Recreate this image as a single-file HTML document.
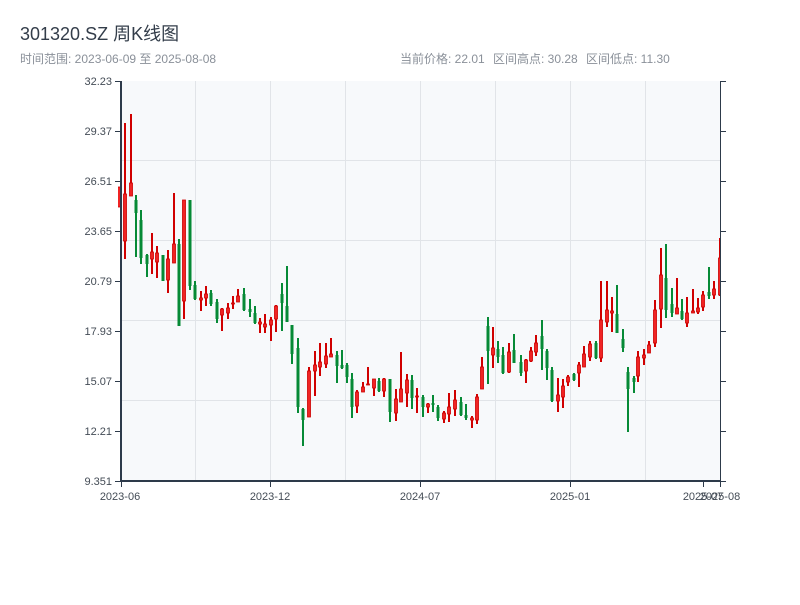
<!DOCTYPE html>
<html><head><meta charset="utf-8"><style>
body{margin:0;background:#fff;width:800px;height:600px;overflow:hidden;font-family:"Liberation Sans","Noto Sans CJK SC",sans-serif}
</style></head><body>
<svg width="800" height="600" xmlns="http://www.w3.org/2000/svg" font-family="Liberation Sans, Noto Sans CJK SC, sans-serif">
<text x="20" y="40" font-size="18" fill="#333d4a">301320.SZ 周K线图</text>
<text x="20" y="63" font-size="12" fill="#8a9099">时间范围: 2023-06-09 至 2025-08-08</text>
<text x="400" y="63" font-size="12" fill="#8a9099">当前价格: 22.01</text>
<text x="493" y="63" font-size="12" fill="#8a9099">区间高点: 30.28</text>
<text x="586" y="63" font-size="12" fill="#8a9099">区间低点: 11.30</text>
<rect x="121" y="81" width="599" height="400" fill="#f7f9fb"/>
<g stroke="#e1e4e8" stroke-width="1">
<line x1="195.5" y1="81" x2="195.5" y2="481"/><line x1="270.5" y1="81" x2="270.5" y2="481"/><line x1="345.5" y1="81" x2="345.5" y2="481"/><line x1="420.5" y1="81" x2="420.5" y2="481"/><line x1="495.5" y1="81" x2="495.5" y2="481"/><line x1="570.5" y1="81" x2="570.5" y2="481"/><line x1="645.5" y1="81" x2="645.5" y2="481"/>
<line x1="121" y1="160.5" x2="720" y2="160.5"/><line x1="121" y1="240.5" x2="720" y2="240.5"/><line x1="121" y1="320.5" x2="720" y2="320.5"/><line x1="121" y1="400.5" x2="720" y2="400.5"/>
</g>
<defs><clipPath id="c"><rect x="118" y="81" width="602" height="400"/></clipPath></defs>
<g clip-path="url(#c)" id="cs"></g>
<g stroke="#2d3a4a">
<line x1="121" y1="81" x2="121" y2="482" stroke-width="2"/>
<line x1="120" y1="481" x2="721" y2="481" stroke-width="2"/>
<line x1="720.5" y1="81" x2="720.5" y2="481" stroke-width="1"/>
<g stroke-width="1">
<line x1="115" y1="81.5" x2="121" y2="81.5"/><line x1="115" y1="131.5" x2="121" y2="131.5"/><line x1="115" y1="181.5" x2="121" y2="181.5"/><line x1="115" y1="231.5" x2="121" y2="231.5"/><line x1="115" y1="281.5" x2="121" y2="281.5"/><line x1="115" y1="331.5" x2="121" y2="331.5"/><line x1="115" y1="381.5" x2="121" y2="381.5"/><line x1="115" y1="431.5" x2="121" y2="431.5"/><line x1="115" y1="481.5" x2="121" y2="481.5"/>
<line x1="720" y1="81.5" x2="726" y2="81.5"/><line x1="720" y1="131.5" x2="726" y2="131.5"/><line x1="720" y1="181.5" x2="726" y2="181.5"/><line x1="720" y1="231.5" x2="726" y2="231.5"/><line x1="720" y1="281.5" x2="726" y2="281.5"/><line x1="720" y1="331.5" x2="726" y2="331.5"/><line x1="720" y1="381.5" x2="726" y2="381.5"/><line x1="720" y1="431.5" x2="726" y2="431.5"/><line x1="720" y1="481.5" x2="726" y2="481.5"/>
<line x1="121.5" y1="481" x2="121.5" y2="487"/><line x1="270.5" y1="481" x2="270.5" y2="487"/><line x1="420.5" y1="481" x2="420.5" y2="487"/><line x1="570.5" y1="481" x2="570.5" y2="487"/><line x1="703.5" y1="481" x2="703.5" y2="487"/><line x1="720.5" y1="481" x2="720.5" y2="487"/>
</g></g>
<g font-size="11" fill="#444c56" text-anchor="end">
<text x="112" y="85">32.23</text><text x="112" y="135">29.37</text><text x="112" y="185">26.51</text><text x="112" y="235">23.65</text><text x="112" y="285">20.79</text><text x="112" y="335">17.93</text><text x="112" y="385">15.07</text><text x="112" y="435">12.21</text><text x="112" y="485">9.351</text>
</g>
<g font-size="11" fill="#444c56" text-anchor="middle">
<text x="120" y="500">2023-06</text><text x="270" y="500">2023-12</text><text x="420" y="500">2024-07</text><text x="570" y="500">2025-01</text><text x="703" y="500">2025-07</text><text x="720" y="500">2025-08</text>
</g>
</svg>
<script>
var R=[[119,187,207,187,207],[125,123,259,194,241],[131,114,196,183,196],[152,233,274,252,259],[157,246,278,253,262],[168,250,293,259,280],[174,193,263,244,263],[184,200,319,200,301],[201,291,311,298,300],[206,286,306,294,298],[222,308,331,309,315],[228,303,319,308,313],[233,296,309,303,304],[238,289,302,296,302],[260,318,333,322,324],[265,314,333,324,327],[271,317,341,320,325],[276,305,332,306,319],[309,367,417,371,417],[315,351,396,365,371],[320,343,376,362,367],[326,343,368,356,364],[331,338,357,354,357],[357,390,413,392,406],[363,382,392,387,392],[368,367,385,384,385],[374,379,396,379,388],[384,378,397,379,391],[396,389,421,399,413],[401,352,402,389,402],[407,374,407,380,393],[417,388,413,396,397],[428,403,413,404,407],[444,411,423,413,419],[449,393,422,407,414],[455,390,416,400,409],[472,416,428,418,420],[477,394,424,397,420],[482,357,389,367,389],[493,327,368,348,355],[509,343,373,352,372],[526,359,383,360,371],[531,347,362,351,361],[536,335,356,343,352],[558,378,412,395,401],[563,379,408,386,397],[568,375,386,377,382],[579,362,387,365,373],[584,346,367,354,367],[590,341,361,344,357],[601,281,362,320,358],[607,281,327,310,322],[612,297,332,311,313],[638,351,382,357,376],[644,349,365,355,358],[649,341,353,345,353],[655,300,347,310,343],[661,248,328,275,309],[677,278,314,308,314],[687,297,327,313,323],[693,289,313,311,313],[698,298,314,308,312],[703,291,311,295,307],[714,281,299,289,295],[720,238,296,258,295]];
var G=[[136,195,257,200,213],[141,210,264,220,258],[147,254,277,255,264],[163,255,281,255,281],[179,239,326,244,326],[190,200,290,200,286],[195,281,300,285,299],[211,290,306,293,304],[217,299,323,302,319],[244,288,311,294,310],[250,299,317,309,312],[255,306,324,313,323],[282,283,331,294,303],[287,266,322,306,322],[292,325,364,325,354],[298,338,413,348,407],[303,408,446,409,420],[337,351,383,355,366],[342,350,369,365,368],[347,363,383,365,377],[352,373,418,379,407],[379,378,392,381,391],[390,379,422,379,412],[412,375,409,380,398],[423,395,417,397,407],[433,395,412,403,405],[438,405,421,407,418],[461,397,416,402,415],[466,404,420,415,418],[488,317,384,326,351],[498,341,363,349,357],[503,347,374,355,373],[514,334,363,350,363],[521,355,376,362,373],[542,320,370,336,349],[547,349,380,351,368],[552,367,402,370,401],[574,373,381,374,380],[596,341,359,343,358],[617,285,333,314,333],[623,329,352,339,348],[628,367,432,372,389],[634,376,393,378,382],[666,244,318,278,310],[672,288,317,304,313],[682,299,320,311,319],[709,267,299,292,296]];
var s='';
R.forEach(function(c){s+='<line x1="'+c[0]+'" x2="'+c[0]+'" y1="'+c[1]+'" y2="'+c[2]+'" stroke="#d00000" stroke-width="2"/><rect x="'+(c[0]-1.5)+'" y="'+c[3]+'" width="3" height="'+Math.max(c[4]-c[3],1)+'" fill="#f02424" stroke="#cc0000" stroke-width="0.8"/>';});
G.forEach(function(c){s+='<line x1="'+c[0]+'" x2="'+c[0]+'" y1="'+c[1]+'" y2="'+c[2]+'" stroke="#068a36" stroke-width="2"/><rect x="'+(c[0]-1.5)+'" y="'+c[3]+'" width="3" height="'+Math.max(c[4]-c[3],1)+'" fill="#068a36"/>';});
document.getElementById('cs').innerHTML=s;
</script>
</body></html>
